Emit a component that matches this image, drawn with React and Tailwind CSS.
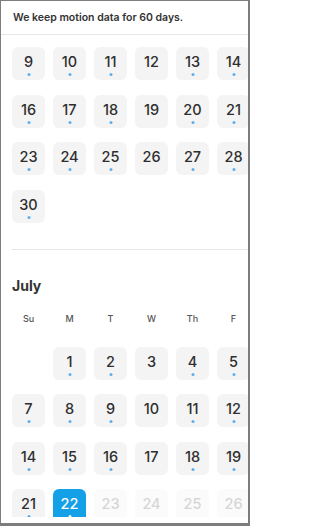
import React from 'react';

const font = { fontFamily: 'Inter, "Noto Sans", sans-serif' };

// the Saturday column sits past the right edge, so only Su–F are filled in
const june = [
  [9, 10, 11, 12, 13, 14, null],
  [16, 17, 18, 19, 20, 21, null],
  [23, 24, 25, 26, 27, 28, null],
  [30],
];

const july = [
  [null, 1, 2, 3, 4, 5, null],
  [7, 8, 9, 10, 11, 12, null],
  [14, 15, 16, 17, 18, 19, null],
  [21, 22, 23, 24, 25, 26, null],
];

const weekdays = ['Su', 'M', 'T', 'W', 'Th', 'F', ''];

const DayCell = ({ day, col, today, future }) => {
  if (day == null) return <div className="h-[33px] w-[33px]" />;
  const isToday = day === today;
  const isFuture = future && day > today;
  const hasDot = !isFuture && col !== 3;

  let box = 'bg-[#f4f4f5] text-[#2f2f2f]';
  if (isToday) box = 'bg-[#14a0e6] text-white';
  if (isFuture) box = 'bg-[#fbfbfb] text-[#d6d6d6]';

  return (
    <div className={`relative flex h-[33px] w-[33px] items-center justify-center rounded-[6px] pb-[2px] ${box}`}>
      <span className="text-[14.5px] font-medium leading-none">{day}</span>
      {hasDot && (
        <span
          className={`absolute bottom-[4px] left-1/2 h-[3px] w-[3px] -translate-x-1/2 rounded-full ${
            isToday ? 'bg-white' : 'bg-[#5eaeea]'
          }`}
        />
      )}
    </div>
  );
};

const MonthGrid = ({ weeks, today, future }) => (
  <div className="grid grid-cols-[repeat(7,33px)] gap-x-2 gap-y-[14.5px]">
    {weeks.map((week, wi) =>
      week.map((day, di) => (
        <DayCell key={`${wi}-${di}`} day={day} col={di} today={today} future={future} />
      ))
    )}
  </div>
);

export default function App() {
  return (
    <div
      className="flex h-[526px] w-[250px] flex-col border-b-[3px] border-l border-r-2 border-t border-[#7d7d7d] bg-white"
      style={font}
    >
      <div className="flex-1 overflow-hidden">
        <div className="flex h-[34px] items-center border-b border-[#e6e6e6] px-[12px]">
          <p className="text-[10.5px] font-semibold text-[#333333] whitespace-nowrap">
            We keep motion data for 60 days.
          </p>
        </div>

        <div className="w-max pl-[11px] pt-3">
          <MonthGrid weeks={june} today={99} />
        </div>

        <div className="ml-[11px] mt-[26px] h-px bg-[#e6e6e6]" />

        <div className="w-max pl-[11px]">
          <h2 className="mt-[28px] text-[14px] font-bold leading-[16px] text-[#333333]">July</h2>

          <div className="mt-[19px] grid grid-cols-[repeat(7,33px)] gap-x-2">
            {weekdays.map((w, i) => (
              <span key={i} className="text-center text-[9px] font-medium leading-[12px] text-[#555555]">
                {w}
              </span>
            ))}
          </div>

          <div className="mt-[22px]">
            <MonthGrid weeks={july} today={22} future />
          </div>
        </div>
      </div>
      <div className="h-[6px] shrink-0" />
    </div>
  );
}
